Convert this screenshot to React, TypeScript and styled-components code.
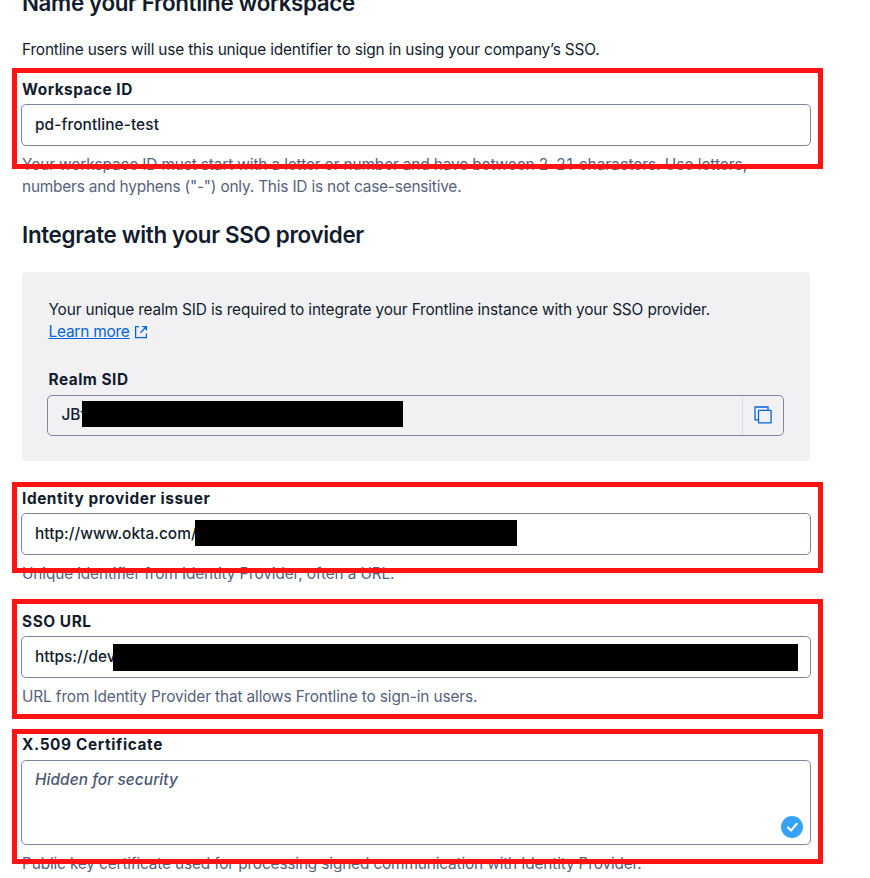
import React from "react";
import styled, { createGlobalStyle } from "styled-components";

const GlobalStyle = createGlobalStyle`
  * { box-sizing: border-box; }
  html, body { margin: 0; background: #fff; overflow: hidden; }
  body {
    font-family: Inter, "Liberation Sans", sans-serif;
    font-size: 15.4px;
    line-height: 22px;
    color: #121c2d;
    font-feature-settings: "calt" 0;
  }
`;

const Page = styled.main`
  width: 870px;
  height: 878px;
  overflow: hidden;
`;

const Form = styled.form`
  width: 788px;
  margin: -13px 0 0 22px;
`;

const Heading = styled.h2<{ $tracking: string; $gap?: number }>`
  margin: ${(p) => p.$gap ?? 0}px 0 0;
  height: 32px;
  font-size: 22.4px;
  line-height: 32px;
  font-weight: 600;
  letter-spacing: ${(p) => p.$tracking};
  white-space: nowrap;
`;

const Paragraph = styled.p<{ $tracking?: string }>`
  margin: 0;
  white-space: nowrap;
  letter-spacing: ${(p) => p.$tracking ?? "0"};
`;

const Intro = styled(Paragraph)`
  margin-top: 20px;
`;

const CardText = styled(Paragraph)`
  padding-left: 0.5px;
`;

const Field = styled.div<{ $gap: number }>`
  position: relative;
  margin-top: ${(p) => p.$gap}px;
`;

const Label = styled.label<{ $tracking: string }>`
  display: block;
  height: 22px;
  font-weight: 700;
  white-space: nowrap;
  letter-spacing: ${(p) => p.$tracking};
`;

const CardLabel = styled(Label)`
  padding-left: 0.5px;
`;

const Control = styled.div<{ $height: number; $gap?: number }>`
  position: relative;
  display: flex;
  height: ${(p) => p.$height}px;
  margin: ${(p) => p.$gap ?? 3}px -1px 0;
  border: 1px solid #7d879e;
  border-radius: 5px;
`;

const Value = styled.div<{ $tracking?: string }>`
  flex: 1;
  padding: 9px 13px;
  font-weight: 500;
  white-space: nowrap;
  letter-spacing: ${(p) => p.$tracking ?? "0"};
`;

const RealmValue = styled(Value)`
  padding: 8px 13px 8px 13.5px;
`;

const Placeholder = styled(Value)`
  padding-top: 8px;
  font-style: italic;
  color: #4b5671;
`;

const CopyButton = styled.button`
  display: flex;
  align-items: center;
  justify-content: center;
  width: 41px;
  padding: 0 0 1px;
  border: 0;
  border-left: 1px solid #dcdde6;
  background: none;
`;

const Help = styled.p<{ $tracking?: string }>`
  margin: 8px 0 0;
  color: #57627d;
  white-space: nowrap;
  letter-spacing: ${(p) => p.$tracking ?? "0"};
`;

const Tracked = styled.span<{ $tracking: string }>`
  letter-spacing: ${(p) => p.$tracking};
`;

const Card = styled.section`
  height: 189px;
  margin-top: 21px;
  padding: 27px 27px 0 26px;
  border-radius: 4px;
  background: #f1f1f4;
`;

const LinkRow = styled.div`
  display: flex;
  align-items: center;
  gap: 4px;
  padding-left: 0.5px;
`;

const Link = styled.a<{ $tracking: string }>`
  color: #0263e0;
  text-decoration: underline;
  letter-spacing: ${(p) => p.$tracking};
`;

const Redaction = styled.span<{ $x: number; $y: number; $w: number; $h: number }>`
  position: absolute;
  left: ${(p) => p.$x}px;
  top: ${(p) => p.$y}px;
  width: ${(p) => p.$w}px;
  height: ${(p) => p.$h}px;
  background: #000;
`;

const Highlight = styled.span<{ $top: number; $height: number }>`
  position: absolute;
  left: -10px;
  top: ${(p) => p.$top}px;
  width: 811px;
  height: ${(p) => p.$height}px;
  border: 5px solid #ff1414;
  pointer-events: none;
`;

const CheckBadge = styled.svg`
  position: absolute;
  right: 7px;
  bottom: 6px;
`;

function ExternalIcon() {
  return (
    <svg width="14" height="14" viewBox="0 0 14 14" fill="none" stroke="#0263e0" strokeWidth="1.3">
      <path d="M5 1.6H1.6V12.6H12.4V8.5M8.2 1.6H12.4V5.6M12.2 1.8L6.4 7.8" />
    </svg>
  );
}

function CopyIcon() {
  return (
    <svg width="18" height="18" viewBox="0 0 18 18" fill="none" stroke="#0263e0" strokeWidth="1.3">
      <path d="M4.5 13.8H1V1H14V4.3" />
      <rect x="4.5" y="4.3" width="12.6" height="12.6" rx="0.5" />
    </svg>
  );
}

export default function App() {
  return (
    <>
      <GlobalStyle />
      <Page>
        <Form>
          <Heading $tracking="-0.38px">Name your Frontline workspace</Heading>
          <Intro $tracking="-0.17px">
            Frontline users will use this unique identifier to sign in using your company’s SSO.
          </Intro>

          <Field $gap={18}>
            <Label $tracking="0.5px">Workspace ID</Label>
            <Control $height={42}>
              <Value $tracking="0.1px">pd-frontline-test</Value>
            </Control>
            <Help $tracking="-0.19px">
              <Tracked $tracking="-0.13px">
                Your workspace ID must start with a letter or number and have between{" "}
              </Tracked>
              <Tracked $tracking="0.85px">2-21 </Tracked>
              <Tracked $tracking="-0.02px">characters. Use letters,</Tracked>
              <br />
              numbers and hyphens ("-") only. This ID is not case-sensitive.
            </Help>
            <Highlight $top={-11} $height={101} />
          </Field>

          <Heading $gap={21} $tracking="-0.32px">
            Integrate with your SSO provider
          </Heading>

          <Card>
            <CardText $tracking="-0.15px">
              Your unique realm SID is required to integrate your Frontline instance with your SSO provider.
            </CardText>
            <LinkRow>
              <Link $tracking="-0.2px">Learn more</Link>
              <ExternalIcon />
            </LinkRow>
            <Field $gap={26}>
              <CardLabel $tracking="0.5px">Realm SID</CardLabel>
              <Control $height={41} $gap={4}>
                <RealmValue>JBf</RealmValue>
                <CopyButton type="button" aria-label="Copy">
                  <CopyIcon />
                </CopyButton>
                <Redaction $x={33.5} $y={5} $w={321.5} $h={26} />
              </Control>
            </Field>
          </Card>

          <Field $gap={27}>
            <Label $tracking="0.56px">Identity provider issuer</Label>
            <Control $height={42}>
              <Value $tracking="0.04px">http://www.okta.com/</Value>
              <Redaction $x={173} $y={6} $w={322} $h={26} />
            </Control>
            <Help $tracking="-0.13px">Unique identifier from Identity Provider, often a URL.</Help>
            <Highlight $top={-6} $height={91} />
          </Field>

          <Field $gap={26}>
            <Label $tracking="0.55px">SSO URL</Label>
            <Control $height={42}>
              <Value $tracking="0.04px">https://dev</Value>
              <Redaction $x={91} $y={7} $w={685} $h={27} />
            </Control>
            <Help $tracking="-0.13px">URL from Identity Provider that allows Frontline to sign-in users.</Help>
            <Highlight $top={-12} $height={120} />
          </Field>

          <Field $gap={26}>
            <Label $tracking="0.62px">X.509 Certificate</Label>
            <Control $height={85} $gap={4}>
              <Placeholder $tracking="0.08px">Hidden for security</Placeholder>
              <CheckBadge width="22" height="22" viewBox="0 0 22 22">
                <circle cx="11" cy="11" r="11" fill="#36a2f8" />
                <path d="M7 11.5L10 14.4L15.8 7.8" fill="none" stroke="#fff" strokeWidth="2.1" strokeLinecap="round" />
              </CheckBadge>
            </Control>
            <Help $tracking="-0.15px">
              Public key certificate used for processing signed communication with Identity Provider.
            </Help>
            <Highlight $top={-5} $height={135} />
          </Field>
        </Form>
      </Page>
    </>
  );
}
